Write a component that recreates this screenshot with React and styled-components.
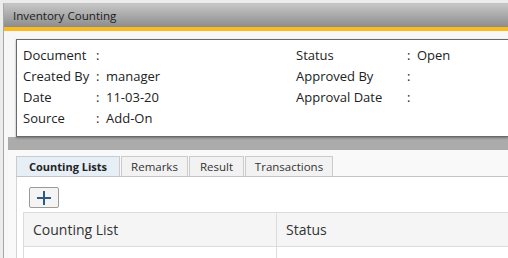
import styled, { createGlobalStyle } from "styled-components";

const Global = createGlobalStyle`
  html, body { margin: 0; padding: 0; }
  body {
    background: #ececec;
    font-family: "Open Sans", "Noto Sans", sans-serif;
    overflow: hidden;
  }
`;

const Root = styled.div`
  padding: 3px 0 0 3px;
  height: 100vh;
  box-sizing: border-box;
  overflow: hidden;
`;

const Window = styled.div`
  border-left: 1px solid #a8a8a8;
  border-top: 1px solid #c2c2c2;
  background: #f7f7f7;
  height: 100%;
  display: flex;
  flex-direction: column;
  overflow: hidden;
`;

const TitleBar = styled.div`
  height: 23px;
  background: linear-gradient(#c6c6c6, #8c8c8c);
  color: #1c1c1c;
  font-size: 11.6px;
  line-height: 23px;
  padding-left: 9px;
  border-bottom: 4px solid #fbba1e;
`;

const Body = styled.div`
  flex: 1;
  min-height: 0;
  display: flex;
  flex-direction: column;
  padding: 8px 0 0 4px;
`;

const HeaderPanel = styled.div`
  margin-left: 8px;
  border: 1px solid #6a6a6a;
  border-right: none;
  background: #fff;
  box-shadow: 0 1px 2px rgba(0, 0, 0, 0.35);
  padding: 4px 0 8px 6px;
  display: grid;
  grid-template-columns: 73px 10px 190px 111px 10px 1fr;
  grid-auto-rows: 21px;
  align-items: center;
  font-size: 13px;
  color: #222;
  position: relative;
  z-index: 1;
`;

const Cell = styled.span`
  white-space: nowrap;
`;

const Band = styled.div`
  height: 13px;
  flex-shrink: 0;
  background: #ababab;
`;

const Lower = styled.div`
  flex: 1;
  min-height: 0;
  background: #f9f9f9;
  padding: 6px 0 0 8px;
  display: flex;
  flex-direction: column;
`;

const TabStrip = styled.div`
  display: flex;
  gap: 1px;
  border-bottom: 1px solid #c4c4c4;
`;

const Tab = styled.div`
  height: 20px;
  line-height: 20px;
  font-size: ${(p) => (p.$active ? "11px" : "11.5px")};
  white-space: nowrap;
  border: 1px solid #cbcbcb;
  border-bottom: none;
  background: ${(p) => (p.$active ? "#e6eef6" : "#f2f2f2")};
  font-weight: ${(p) => (p.$active ? 700 : 400)};
  color: ${(p) => (p.$active ? "#222" : "#333")};
  width: ${(p) => p.$w}px;
  box-sizing: border-box;
  text-align: center;
`;

const Content = styled.div`
  flex: 1;
  min-height: 0;
  overflow: hidden;
  background: #fff;
  border-left: 1px solid #d4d4d4;
  padding: 10px 0 0 6px;
`;

const AddButton = styled.button`
  width: 30px;
  height: 21px;
  margin-left: 6px;
  padding: 0;
  border: 1px solid #9a9a9a;
  border-radius: 2px;
  background: #f4f4f4;
  display: flex;
  align-items: center;
  justify-content: center;
`;

const Table = styled.div`
  margin-top: 4px;
  border: 1px solid #dcdcdc;
  border-right: none;
  display: grid;
  grid-template-columns: 252px 1fr;
`;

const HeadCell = styled.div`
  height: 33px;
  line-height: 33px;
  background: #f5f5f5;
  border-bottom: 1px solid #dcdcdc;
  border-left: ${(p) => (p.$first ? "none" : "1px solid #dcdcdc")};
  padding-left: 9px;
  font-size: 14px;
  color: #333;
`;

const DataCell = styled.div`
  height: 33px;
  border-left: ${(p) => (p.$first ? "none" : "1px solid #dcdcdc")};
`;

const rows = [
  ["Document", "", "Status", "Open"],
  ["Created By", "manager", "Approved By", ""],
  ["Date", "11-03-20", "Approval Date", ""],
  ["Source", "Add-On", "", ""],
];

const tabs = [
  ["Counting Lists", 104],
  ["Remarks", 67],
  ["Result", 55],
  ["Transactions", 88],
];

export default function App() {
  return (
    <Root>
      <Global />
      <Window>
        <TitleBar>Inventory Counting</TitleBar>
        <Body>
          <HeaderPanel>
            {rows.map(([l, v, rl, rv]) => (
              <>
                <Cell>{l}</Cell>
                <Cell>:</Cell>
                <Cell>{v}</Cell>
                <Cell>{rl}</Cell>
                <Cell>{rl ? ":" : ""}</Cell>
                <Cell>{rv}</Cell>
              </>
            ))}
          </HeaderPanel>
          <Band />
          <Lower>
            <TabStrip>
              {tabs.map(([t, w], i) => (
                <Tab key={t} $active={i === 0} $w={w}>
                  {t}
                </Tab>
              ))}
            </TabStrip>
            <Content>
              <AddButton>
                <svg width="14" height="14" viewBox="0 0 14 14">
                  <path d="M7 0v14M0 7h14" stroke="#2c5a86" strokeWidth="2" />
                </svg>
              </AddButton>
              <Table>
                <HeadCell $first>Counting List</HeadCell>
                <HeadCell>Status</HeadCell>
                <DataCell $first />
                <DataCell />
              </Table>
            </Content>
          </Lower>
        </Body>
      </Window>
    </Root>
  );
}
